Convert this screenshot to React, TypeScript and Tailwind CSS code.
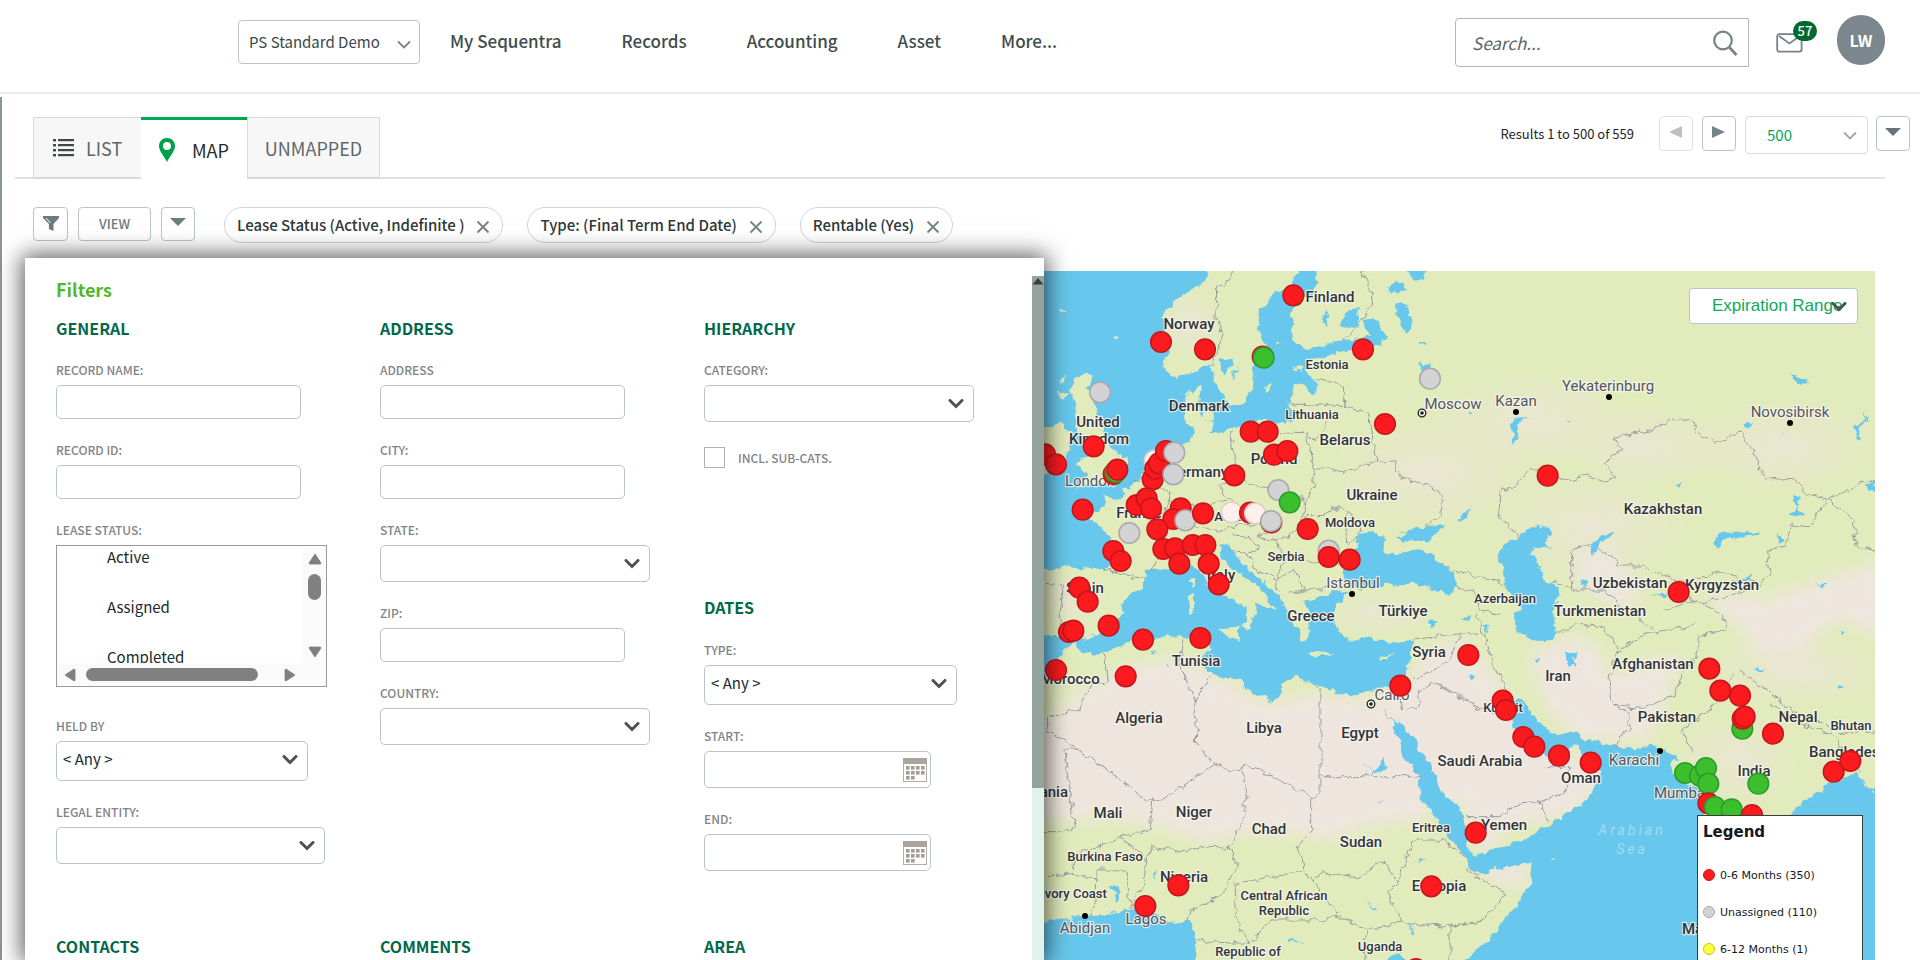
import React from "react";
import { clsx } from "clsx";

type Pt = [number, number];

/* ---------- small drawings ---------- */

function Chevron({ thin = false, className = "" }: { thin?: boolean; className?: string }) {
  return (
    <svg viewBox="0 0 16 10" className={clsx("pointer-events-none absolute h-[10px] w-4", className)} fill="none" aria-hidden="true">
      <path d="M2 1.5 L8 7.5 L14 1.5" stroke="currentColor" strokeWidth={thin ? 1.8 : 3} strokeLinecap={thin ? "butt" : "round"} />
    </svg>
  );
}

function Triangle({ dir, className = "" }: { dir: "up" | "down" | "left" | "right"; className?: string }) {
  const d = {
    up: "M7 2 L13 11 Q13 12 12 12 L2 12 Q1 12 1 11 Z",
    down: "M7 12 L13 3 Q13 2 12 2 L2 2 Q1 2 1 3 Z",
    left: "M2 7 L11 1 Q12 1 12 2 L12 12 Q12 13 11 13 Z",
    right: "M12 7 L3 1 Q2 1 2 2 L2 12 Q2 13 3 13 Z",
  }[dir];
  return (
    <svg viewBox="0 0 14 14" className={clsx("h-[14px] w-[14px]", className)} stroke="currentColor" strokeWidth="0.8" strokeLinejoin="round" aria-hidden="true">
      <path d={d} fill="currentColor" />
    </svg>
  );
}

function ButtonArrow({ dir }: { dir: "down" | "left" | "right" }) {
  const d = { down: "M0 3 H16 L8 11 Z", left: "M1 7 L14 1 V13 Z", right: "M14 7 L1 1 V13 Z" }[dir];
  return (
    <svg viewBox="0 0 16 14" className="-mt-1 h-[14px] w-4" aria-hidden="true">
      <path d={d} fill="currentColor" />
    </svg>
  );
}

function CalendarIcon() {
  const cells: Pt[] = [[3, 8], [8, 8], [13, 8], [18, 8], [3, 13], [8, 13], [13, 13], [18, 13], [3, 18], [8, 18]];
  return (
    <svg viewBox="0 0 24 24" className="h-6 w-6" aria-hidden="true">
      <rect x="0.5" y="0.5" width="23" height="23" fill="#fff" stroke="#b3ada6" />
      <rect width="24" height="6" fill="#aaa49d" />
      {cells.map(([x, y]) => (
        <rect key={`${x}-${y}`} x={x} y={y} width="3.600" height="3.600" fill="#a39d96" />
      ))}
    </svg>
  );
}

/* ---------- header ---------- */

function Header() {
  return (
    <header className="flex h-[94px] shrink-0 items-start border-b-2 border-[#e8ecec] pr-[35px] pl-[238px]">
      <div className="relative mt-5">
        <select aria-label="Portfolio" className="h-11 w-[182px] appearance-none rounded border border-[#bac5c9] bg-white pl-[10px] text-[15px] text-[#3c4648]">
          <option>PS Standard Demo</option>
        </select>
        <Chevron thin className="top-5 right-2 text-[#76848a]" />
      </div>
      <nav className="mt-7 ml-[30px] flex gap-[60px] text-[17px] leading-[26px] font-medium text-[#414b4d]">
        {["My Sequentra", "Records", "Accounting", "Asset", "More..."].map((n) => (
          <a key={n} href="#">{n}</a>
        ))}
      </nav>
      <div className="mt-[18px] ml-auto flex h-[49px] w-[294px] items-center rounded-l border border-[#b4b4c0] pr-[10px] pl-4">
        <input aria-label="Search" placeholder="Search..." className="min-w-0 flex-1 text-[17px] italic outline-none placeholder:text-[#5d6668]" />
        <svg viewBox="0 0 26 26" className="h-[26px] w-[26px]" fill="none" stroke="#76848a" aria-hidden="true">
          <circle cx="11" cy="10.5" r="8.8" strokeWidth="2.200" />
          <path d="M17 17 L24.5 25" strokeWidth="2.800" />
        </svg>
      </div>
      <button aria-label="Messages, 57 unread" className="relative mt-[33px] ml-[27px] h-5 w-[27px]">
        <svg viewBox="0 0 27 20" className="h-5 w-[27px]" fill="none" stroke="#76848a" strokeWidth="1.8" aria-hidden="true">
          <rect x="1.2" y="1.2" width="24.4" height="17.4" rx="2" />
          <path d="M3 3 L13.4 10.5 L24 3" />
        </svg>
        <span className="absolute -top-3 left-[17px] flex h-5 w-6 items-center justify-center rounded-full bg-[#00692f] text-[13px] leading-5 font-medium text-white">57</span>
      </button>
      <button aria-label="Account" className="mt-[15px] ml-[34px] flex h-[50px] w-12 items-center justify-center rounded-full bg-[#7b878d] text-base font-bold text-white">
        LW
      </button>
    </header>
  );
}

/* ---------- tabs and paging ---------- */

function TabsBar() {
  const square = "flex h-[35px] w-[34px] items-center justify-center rounded border";
  return (
    <div className="mr-[10px] ml-[15px] flex h-[85px] shrink-0 items-end">
      <div className="flex h-[63px] w-full min-w-0 items-end">
        <div className="w-[18px] self-stretch border-b-2 border-[#dfe2e2]" />
        <div role="tablist" className="flex h-[62px] text-lg leading-none">
          <button role="tab" aria-selected={false} className="flex w-[108px] items-center gap-3 border border-r-0 border-b-2 border-[#d6dada] bg-[#f7f7f7] pl-[19px] text-[#5f6668]">
            <svg viewBox="0 0 21 18" className="h-[18px] w-[21px]" fill="#3e4648" aria-hidden="true">
              {[0, 5, 10, 15].map((y) => (
                <g key={y}>
                  <rect x="0" y={y} width="3" height="2.4" />
                  <rect x="5" y={y} width="16" height="2.2" />
                </g>
              ))}
            </svg>
            LIST
          </button>
          <button role="tab" aria-selected className="flex w-[106px] items-center gap-[17px] border-t-[3px] border-[#00a651] bg-white pl-[18px] text-[#222b2d]">
            <svg viewBox="0 0 16 24" className="h-6 w-4" aria-hidden="true">
              <path fillRule="evenodd" fill="#00a04b" d="M8 0 C12.5 0 16 3.3 16 8 C16 13 10.5 19 8 24 C5.500 19 0 13 0 8 C0 3.300 3.500 0 8 0 Z M8 4 A4 4 0 1 0 8 12 A4 4 0 1 0 8 4 Z" />
            </svg>
            MAP
          </button>
          <button role="tab" aria-selected={false} className="w-[133px] border border-b-2 border-[#d6dada] bg-[#f7f7f7] text-[#5f6668]">
            UNMAPPED
          </button>
        </div>
        <div className="mr-[25px] flex-1 self-stretch border-b-2 border-[#dfe2e2]">
          <div className="-mr-[25px] flex items-start justify-end">
            <span className="mr-[25px] text-[13px] leading-9 text-[#1f2427]">Results 1 to 500 of 559</span>
            <button aria-label="Previous page" className={clsx(square, "border-[#dde2e4] text-[#b9c1c4]")}>
              <ButtonArrow dir="left" />
            </button>
            <button aria-label="Next page" className={clsx(square, "ml-[9px] border-[#bac5c9] text-[#76848a]")}>
              <ButtonArrow dir="right" />
            </button>
            <div className="relative ml-[9px]">
              <select aria-label="Page size" className="h-[38px] w-[123px] appearance-none rounded border border-[#e0dad3] bg-white pl-[21px] text-[15px] text-[#00a651]">
                <option>500</option>
              </select>
              <Chevron thin className="top-[15px] right-[10px] text-[#a0a5a8]" />
            </div>
            <button aria-label="More options" className={clsx(square, "ml-2 border-[#bac5c9] text-[#66757b]")}>
              <ButtonArrow dir="down" />
            </button>
          </div>
        </div>
      </div>
    </div>
  );
}

function FilterBar() {
  const btn = "flex h-[34px] items-center justify-center rounded border border-[#bac5c9] bg-white text-[#6d7b80]";
  return (
    <div className="flex h-[79px] shrink-0 items-start pt-7 pl-[33px]">
      <button aria-label="Filter" className={clsx(btn, "w-[35px]")}>
        <svg viewBox="0 0 16 16" className="h-4 w-4" fill="currentColor" aria-hidden="true">
          <path d="M0 0 H16 V2 L10.500 8 V15 L6 13 V8 L0 2 Z" />
          <path d="M3 2 L7.500 7" stroke="#fff" strokeWidth="1" />
        </svg>
      </button>
      <button className={clsx(btn, "ml-[10px] w-[73px] text-[13px] font-medium")}>VIEW</button>
      <button aria-label="View options" className={clsx(btn, "ml-[10px] w-[34px]")}>
        <ButtonArrow dir="down" />
      </button>
      <ul className="ml-[29px] flex gap-6 text-[15px] font-medium text-[#2f383a]">
        {["Lease Status (Active, Indefinite )", "Type: (Final Term End Date)", "Rentable (Yes)"].map((c) => (
          <li key={c} className="flex h-9 items-center gap-3 rounded-full border border-[#ced5d8] bg-white px-3">
            {c}
            <button aria-label={`Remove ${c}`} className="mt-1 text-[#76848a]">
              <svg viewBox="0 0 14 14" className="h-[14px] w-[14px]" aria-hidden="true">
                <path d="M1.500 1.500 L12.500 12.500 M12.500 1.500 L1.500 12.500" stroke="currentColor" strokeWidth="1.900" />
              </svg>
            </button>
          </li>
        ))}
      </ul>
    </div>
  );
}

/* ---------- filter panel ---------- */

const control = "block appearance-none rounded-[5px] border border-[#bac5c9] bg-white text-[15px] text-[#20282b] outline-none";

function Field({ id, label, children }: { id: string; label: string; children: React.ReactNode }) {
  return (
    <div>
      <label htmlFor={id} className="mb-[5px] block text-[12px] leading-5 font-medium text-[#808485]">{label}</label>
      {children}
    </div>
  );
}

function TextField({ id, label }: { id: string; label: string }) {
  return (
    <Field id={id} label={label}>
      <input id={id} type="text" className={clsx(control, "h-[34px] w-[245px] px-2")} />
    </Field>
  );
}

function SelectField({ id, label, value = "", size }: { id: string; label: string; value?: string; size: string }) {
  return (
    <Field id={id} label={label}>
      <div className={clsx("relative", size)}>
        <select id={id} className={clsx(control, "h-full w-full pb-[3px] pl-[6px]")}>
          <option>{value}</option>
        </select>
        <Chevron className="top-[14px] right-[10px] text-[#4d5153]" />
      </div>
    </Field>
  );
}

function DateField({ id, label }: { id: string; label: string }) {
  return (
    <Field id={id} label={label}>
      <div className={clsx(control, "flex h-[37px] w-[227px] items-center pr-[3px]")}>
        <input id={id} type="text" className="min-w-0 flex-1 px-2 outline-none" />
        <button aria-label={`Choose ${label.toLowerCase()}`}>
          <CalendarIcon />
        </button>
      </div>
    </Field>
  );
}

function LeaseStatusList() {
  return (
    <div className="mb-2 grid h-[142px] w-[271px] grid-cols-[1fr_23px] grid-rows-[1fr_23px] border border-[#979b9d] text-[#7f7f7f]">
      <select id="lease-status" multiple className="block h-full w-full overflow-hidden text-[15px] text-[#20282b] outline-none [scrollbar-width:none]">
        {["Active", "Assigned", "Completed", "Indefinite"].map((o) => (
          <option key={o} className="p-0 pb-[29px] pl-[50px] leading-[22px]">{o}</option>
        ))}
      </select>
      <div className="flex flex-col items-center bg-[#fafafa] pt-[6px]">
        <Triangle dir="up" />
        <div className="mt-2 h-[26px] w-[13px] rounded-full bg-[#808080]" />
        <Triangle dir="down" className="mt-auto mb-1" />
      </div>
      <div className="col-span-2 flex items-center bg-[#fafafa] pr-[29px] pl-[6px]">
        <Triangle dir="left" />
        <div className="ml-[9px] h-[13px] w-[172px] rounded-full bg-[#808080]" />
        <Triangle dir="right" className="ml-auto" />
      </div>
    </div>
  );
}

function Heading({ children, className = "" }: { children: string; className?: string }) {
  return <h3 className={clsx("text-[16px] leading-5 font-bold text-[#00694a]", className)}>{children}</h3>;
}

function FiltersPanel() {
  return (
    <section aria-label="Filters" className="relative z-10 flex w-[1019px] shrink-0 overflow-visible bg-white shadow-[0_0_22px_3px_rgba(0,0,0,0.65)]">
      <div className="min-w-0 flex-1 overflow-hidden pt-[17px] pl-[31px]">
        <h2 className="text-[18px] leading-7 font-bold text-[#54b824]">Filters</h2>
        <div className="mt-[15px] grid grid-cols-[324px_324px_1fr] gap-y-[65px]">
          <div className="flex flex-col gap-[21px]">
            <Heading className="mb-px">GENERAL</Heading>
            <TextField id="record-name" label="RECORD NAME:" />
            <TextField id="record-id" label="RECORD ID:" />
            <Field id="lease-status" label="LEASE STATUS:">
              <LeaseStatusList />
            </Field>
            <SelectField id="held-by" label="HELD BY" value="< Any >" size="h-10 w-[252px]" />
            <SelectField id="legal-entity" label="LEGAL ENTITY:" size="h-[37px] w-[269px]" />
          </div>
          <div className="flex flex-col gap-[21px]">
            <Heading className="mb-px">ADDRESS</Heading>
            <TextField id="address" label="ADDRESS" />
            <TextField id="city" label="CITY:" />
            <SelectField id="state" label="STATE:" size="h-[37px] w-[270px]" />
            <TextField id="zip" label="ZIP:" />
            <SelectField id="country" label="COUNTRY:" size="h-[37px] w-[270px]" />
          </div>
          <div className="flex flex-col gap-[21px]">
            <Heading className="mb-px">HIERARCHY</Heading>
            <SelectField id="category" label="CATEGORY:" size="h-[37px] w-[270px]" />
            <label className="mt-1 flex items-center gap-[13px] text-[12px] leading-5 font-medium text-[#808485]">
              <input type="checkbox" className="h-[21px] w-[21px] appearance-none border border-[#b4b0ab] bg-white" />
              INCL. SUB-CATS.
            </label>
            <Heading className="mt-[108px] mb-[2px]">DATES</Heading>
            <SelectField id="type" label="TYPE:" value="< Any >" size="h-10 w-[253px]" />
            <DateField id="start" label="START:" />
            <DateField id="end" label="END:" />
          </div>
          <Heading>CONTACTS</Heading>
          <Heading>COMMENTS</Heading>
          <Heading>AREA</Heading>
        </div>
      </div>
      <div className="mt-[18px] w-3 shrink-0 bg-[#dff3e9]">
        <div className="flex h-[512px] justify-center bg-[#94a49c] pt-[2px]">
          <svg viewBox="0 0 12 7" className="h-[7px] w-3" aria-hidden="true">
            <path d="M6 0 L11.500 6.500 H0.500 Z" fill="#3a3f3d" />
          </svg>
        </div>
      </div>
    </section>
  );
}

/* ---------- map ---------- */

const EURASIA =
  "M20,930 L110,920 L180,930 L235,925 L248,880 L240,830 L212,800 L178,782 L172,758 L228,745 L222,704 L242,712 L272,722 L280,690 L320,665 L338,635 L362,590 L385,560 L430,552 L480,555 L492,505 L470,490 L465,400 L515,378 L512,415 L498,440 L520,470 L545,492 L542,520 L600,508 L640,495 L700,482 L750,492 L790,485 L778,430 L792,380 L820,370 L842,402 L860,390 L858,362 L828,340 L835,298 L900,290 L940,270 L1000,272 L1058,252 L1030,225 L940,246 L880,255 L832,270 L788,235 L785,160 L830,110 L865,70 L850,20 L2560,20 L2560,1610 L2510,1580 L2485,1535 L2440,1555 L2400,1570 L2370,1590 L2320,1630 L2290,1660 L2230,1690 L2200,1830 L2130,2020 L2080,1980 L2030,1720 L2005,1590 L1970,1575 L1930,1550 L1922,1505 L1950,1500 L1880,1456 L1790,1465 L1720,1452 L1660,1440 L1630,1415 L1580,1425 L1530,1390 L1500,1350 L1470,1310 L1445,1325 L1445,1390 L1470,1440 L1520,1475 L1560,1495 L1615,1490 L1632,1450 L1650,1470 L1660,1500 L1712,1530 L1695,1590 L1665,1620 L1610,1660 L1530,1712 L1430,1760 L1330,1786 L1315,1760 L1308,1700 L1300,1660 L1268,1620 L1232,1590 L1210,1530 L1160,1450 L1112,1385 L1105,1350 L1118,1290 L1126,1250 L1140,1190 L1150,1140 L1080,1148 L1000,1133 L960,1145 L922,1110 L905,1050 L870,1040 L930,1010 L935,985 L870,1010 L850,1015 L820,1030 L850,1065 L830,1090 L845,1115 L822,1145 L800,1100 L765,1050 L752,1020 L735,995 L680,950 L620,890 L600,850 L568,858 L575,895 L620,935 L690,985 L740,1050 L700,1035 L675,1030 L678,1060 L650,1110 L635,1095 L655,1065 L640,1030 L590,1010 L545,985 L520,945 L490,915 L440,935 L400,922 L348,930 L335,985 L275,1025 L282,1055 L240,1110 L190,1128 L140,1140 L95,1125 L20,1125 Z";

const SCANDINAVIA =
  "M540,20 L512,75 L455,105 L425,140 L395,170 L408,200 L390,235 L415,270 L398,310 L410,335 L440,355 L490,335 L520,318 L545,310 L548,350 L575,400 L600,440 L640,432 L665,390 L672,310 L720,275 L700,250 L682,200 L690,150 L720,110 L780,80 L815,20 Z";

const AFRICA =
  "M20,1255 L70,1220 L100,1175 L125,1150 L150,1175 L220,1183 L262,1165 L300,1145 L400,1130 L470,1128 L530,1128 L545,1165 L515,1205 L545,1245 L632,1260 L650,1295 L732,1325 L752,1300 L762,1265 L800,1248 L870,1278 L970,1310 L1050,1285 L1115,1290 L1108,1385 L1095,1388 L1052,1335 L1085,1385 L1130,1500 L1160,1540 L1175,1620 L1210,1660 L1240,1710 L1290,1770 L1312,1800 L1320,1830 L1350,1842 L1430,1820 L1505,1808 L1500,1870 L1460,1940 L1390,2020 L1300,2110 L495,2110 L500,2020 L478,1982 L420,1990 L380,1955 L300,1945 L250,1960 L160,1968 L20,1985 Z";

const ISLANDS = [
  "M148,345 L190,345 L182,372 L162,390 L200,395 L195,440 L215,500 L240,560 L262,582 L300,590 L292,622 L265,652 L200,668 L140,680 L172,648 L138,612 L170,585 L162,540 L140,505 L132,430 L118,390 Z",
  "M20,510 L90,487 L122,520 L112,600 L82,640 L20,642 Z",
  "M565,1110 L632,1098 L625,1142 L600,1135 Z",
  "M474,1010 L495,1005 L495,1050 L478,1060 Z",
  "M480,955 L492,950 L492,985 L480,985 Z",
  "M838,1175 L910,1178 L908,1186 L840,1184 Z",
  "M1050,1190 L1090,1180 L1075,1200 L1055,1200 Z",
  "M520,450 L545,455 L545,485 L520,478 Z",
  "M705,375 L720,365 L715,390 L708,400 Z",
  "M800,320 L822,315 L815,335 L798,332 Z",
  "M738,250 L755,248 L748,258 Z",
  "M90,355 L108,345 L100,370 L85,375 Z",
  "M85,400 L118,395 L100,420 Z",
  "M88,150 L104,152 L96,160 Z",
  "M250,235 L268,230 L260,246 Z",
  "M240,1050 L262,1038 L255,1052 Z",
  "M1565,1789 L1582,1789 L1582,1793 L1565,1793 Z",
];

const LAKES = [
  "M975,870 L990,825 L1040,812 L1068,845 L1062,868 L1092,888 L1130,872 L1165,868 L1200,882 L1250,925 L1275,940 L1280,975 L1262,1005 L1150,972 L1060,975 L1000,990 L955,985 L935,940 L955,900 Z",
  "M1095,838 L1150,802 L1200,800 L1245,795 L1200,840 L1155,850 Z",
  "M1470,830 L1510,800 L1555,800 L1562,830 L1545,850 L1570,860 L1520,860 L1495,880 L1515,890 L1530,930 L1548,970 L1590,975 L1595,1005 L1572,1030 L1575,1130 L1530,1142 L1465,1118 L1450,1080 L1470,1045 L1432,990 L1420,930 L1400,880 L1420,850 Z",
  "M870,1010 L930,1000 L965,1000 L930,1020 L905,1060 L860,1030 Z",
  "M1000,180 L1030,175 L1068,230 L1050,258 L1010,210 Z",
  "M1098,130 L1130,125 L1148,205 L1130,220 L1100,160 Z",
  "M1075,90 L1105,65 L1130,90 L1080,100 Z",
  "M1120,20 L1190,20 L1185,65 L1160,62 Z",
  "M568,300 L600,290 L605,315 L580,345 Z",
  "M610,330 L625,315 L612,365 Z",
  "M875,180 L890,150 L892,200 Z",
  "M925,190 L960,150 L990,140 L985,200 L950,205 Z",
  "M1168,250 L1190,248 L1185,262 Z",
  "M1165,310 L1200,315 L1180,330 Z",
  "M1440,510 L1455,475 L1495,470 L1465,490 L1455,520 L1470,530 L1452,545 Z",
  "M1290,775 L1325,740 L1310,775 L1292,782 Z",
  "M1680,860 L1700,835 L1755,815 L1750,830 L1710,845 L1685,890 Z",
  "M2050,850 L2070,815 L2190,815 L2185,825 L2085,835 L2065,865 Z",
  "M2240,820 L2265,840 L2245,845 Z",
  "M2290,705 L2310,710 L2300,750 L2325,770 L2280,765 L2300,735 Z",
  "M1935,675 L1955,665 L1945,684 Z",
  "M2140,490 L2165,490 L2155,507 L2142,503 Z",
  "M2238,535 L2285,500 L2260,520 Z",
  "M2470,500 L2505,480 L2505,450 L2512,480 L2485,500 L2490,540 L2475,520 Z",
  "M2280,340 L2300,345 L2340,368 L2300,372 Z",
  "M2505,670 L2540,665 L2540,690 L2515,692 Z",
  "M2110,965 L2170,945 L2160,960 L2120,968 Z",
  "M1865,1005 L1920,1000 L1910,1012 Z",
  "M1655,960 L1672,965 L1665,988 L1650,980 Z",
  "M1610,1180 L1640,1170 L1630,1210 L1615,1225 Z",
  "M1515,1200 L1532,1198 L1525,1210 Z",
  "M1360,1090 L1380,1095 L1372,1125 Z",
  "M1285,1080 L1325,1065 L1315,1085 Z",
  "M1195,1080 L1225,1085 L1200,1110 Z",
  "M1318,1245 L1330,1250 L1322,1262 Z",
  "M1000,1510 L1035,1530 L1060,1500 L1070,1525 L1035,1540 L1022,1555 L1030,1530 Z",
  "M1040,1632 L1065,1615 L1050,1630 Z",
  "M232,1885 L268,1880 L270,1920 L250,1925 L255,1900 Z",
  "M372,1830 L382,1835 L375,1860 Z",
  "M1135,1985 L1150,2020 L1142,2025 Z",
  "M1165,1800 L1180,1802 L1172,1812 Z",
  "M1015,1925 L1035,1955 L1030,1958 Z",
  "M780,2040 L830,2045 L780,2048 Z",
  "M1325,2100 L1370,2055 L1370,2110 Z",
  "M1070,2095 L1110,2080 L1130,2110 L1070,2110 Z",
  "M2415,1280 L2440,1278 L2425,1292 Z",
  "M2170,1225 L2210,1230 L2190,1238 Z",
  "M2430,1110 L2450,1112 L2440,1118 Z",
  "M2360,970 L2390,972 L2375,980 Z",
  "M1320,452 L1330,455 L1322,462 Z",
  "M1610,482 L1622,488 L1615,490 Z",
  "M360,1175 L385,1180 L370,1182 Z",
  "M410,1205 L418,1225 L408,1220 Z",
];

const BORDERS =
  "M608,20 L606,55 L560,80 L558,170 L575,210 L565,260 L548,312 " +
  "M990,20 L1005,60 L1030,110 L1000,180 L935,246 " +
  "M860,355 L900,365 L940,380 L945,440 M780,432 L880,435 L945,440 L1015,460 L1030,540 L1040,605 M900,450 L885,500 L860,535 L835,530 M750,515 L830,518 L850,620 L848,680 L820,740 M850,620 L940,635 L1035,605 L1090,600 L1110,650 L1200,680 L1240,710 L1230,770 L1190,800 " +
  "M605,515 L615,600 L620,660 L565,680 L590,710 L620,730 M615,650 L690,680 L760,700 L820,720 L820,765 M420,690 L415,720 L520,740 L590,720 M500,800 L560,815 L640,790 L720,800 L690,830 L740,840 L790,820 L820,765 L870,770 L930,740 L990,790 L985,830 L950,855 M945,760 L950,850 " +
  "M600,820 L640,830 L690,860 L650,880 L680,930 L740,960 L745,995 M740,840 L765,900 L740,960 L790,930 L820,990 L770,1000 M830,900 L900,915 L950,905 M820,990 L900,985 L935,960 M220,925 L280,945 L340,960 M42,970 L100,975 L85,1110 M370,930 L395,850 L350,790 L400,760 L420,700 L340,650 L300,670 M330,640 L420,650 L430,570 M650,880 L600,870 " +
  "M1465,830 L1405,770 L1415,680 L1445,690 L1500,625 L1590,650 L1620,665 L1670,645 L1720,665 L1760,655 L1720,610 L1775,570 L1750,535 L1860,510 L1940,475 L1985,485 L2000,520 L2070,550 L2130,515 L2160,560 L2210,660 L2290,655 L2330,700 L2390,715 L2340,800 L2280,795 L2270,860 L2210,875 L2220,940 L2190,970 L2060,935 L1970,965 L1870,940 L1845,915 L1770,915 L1685,850 L1625,870 L1625,990 L1580,960 L1550,975 " +
  "M2395,720 L2510,660 L2560,668 M2395,720 L2470,780 L2475,860 L2560,870 M1230,920 L1330,945 L1400,960 L1440,985 M1275,985 L1330,990 L1345,1050 L1410,1060 M1625,990 L1720,990 L1790,1050 L1880,1110 M1970,965 L1960,1010 L2020,1030 L2120,1000 L2190,970 M1900,1050 L2000,1020 L2080,1070 L2090,1110 L2000,1130 " +
  "M1575,1120 L1650,1090 L1710,1100 L1750,1140 L1760,1175 L1740,1250 L1745,1335 L1830,1345 L1930,1310 L1960,1240 L2000,1190 L2010,1130 M1755,1180 L1840,1125 L1920,1115 L2000,1090 M1745,1335 L1800,1360 L1800,1410 L1765,1435 L1760,1465 M1990,1485 L1955,1410 L2050,1340 L2100,1280 L2110,1240 M2215,1330 L2310,1390 L2405,1425 L2405,1400 L2290,1350 L2180,1270 L2130,1230 M2430,1420 L2560,1415 M2420,1430 L2450,1500 L2490,1530 M1340,1060 L1390,1210 L1430,1290 M1150,1140 L1290,1118 L1345,1120 M1230,1275 L1370,1355 L1440,1365 M1315,1670 L1410,1670 L1450,1635 L1530,1625 L1605,1600 L1620,1520 L1540,1520 M1530,1625 L1555,1685 " +
  "M220,1185 L235,1265 L180,1275 L150,1345 L55,1370 L55,1410 L290,1570 L350,1625 L405,1615 L555,1510 L500,1450 L495,1320 L445,1210 L465,1135 M545,1250 L515,1285 L495,1325 M555,1510 L610,1530 L655,1512 L845,1610 L845,1710 L805,1760 L820,1830 M870,1285 L870,1600 L845,1610 M870,1550 L1165,1550 M630,1520 L650,1590 L640,1685 L595,1760 L620,1820 M368,1625 L360,1710 L270,1730 L130,1790 L130,1840 M42,1715 L132,1715 L105,1470 L150,1470 " +
  "M350,1810 L365,1760 L440,1770 L595,1760 L625,1810 L570,1910 L480,1950 L470,1985 M350,1810 L340,1870 L300,1940 M270,1730 L330,1780 L350,1810 M195,1830 L190,1970 M195,1830 L290,1830 L300,1940 M50,1850 L130,1840 L200,1860 M820,1830 L740,1850 L615,1870 L620,1980 L660,2050 L720,1980 L870,1980 L930,1970 L1010,2010 L1110,1990 L1270,2000 L1350,1980 M820,1830 L930,1970 M850,1850 L890,1840 L990,1850 L1060,1800 L1100,1870 L1070,1900 L1120,1990 M1100,1870 L1150,1740 L1240,1740 L1310,1795 M1110,1310 L1115,1350 L1170,1340 L1165,1290 L1215,1270 L1350,1350 M1150,1260 L1260,1200 L1290,1120 M1310,1830 L1430,1900 L1360,1980 L1260,2000 L1260,2110 M500,2045 L660,2050 M1010,2010 L1000,2110";

const DESERTS = [
  "M20,1390 L150,1300 L260,1230 L420,1190 L560,1240 L700,1330 L860,1300 L1040,1320 L1120,1290 L1180,1180 L1300,1130 L1400,1260 L1520,1420 L1740,1540 L1640,1660 L1440,1700 L1350,1790 L1300,1640 L1240,1620 L1160,1690 L1040,1690 L900,1740 L760,1720 L640,1720 L540,1750 L380,1700 L250,1680 L20,1680 Z",
  "M1500,1180 L1620,1130 L1700,1150 L1740,1250 L1860,1200 L1960,1180 L1920,1280 L1860,1440 L1640,1440 L1540,1330 Z",
  "M2120,1080 L2240,1000 L2380,960 L2560,900 L2560,1130 L2420,1080 L2300,1180 L2180,1190 Z",
  "M1640,880 L1720,860 L1800,940 L1840,1020 L1760,1040 L1640,980 Z",
  "M1330,1820 L1500,1800 L1490,1880 L1420,1880 Z",
  "M2040,1000 L2200,1010 L2140,1090 L2060,1060 Z",
];

const STEPPES: [number, number, number, number][] = [
  [1200, 640, 340, 180],
  [1500, 480, 330, 150],
  [1850, 560, 260, 130],
  [2260, 560, 300, 150],
  [1680, 800, 320, 170],
  [480, 190, 110, 120],
  [120, 1020, 130, 90],
  [1050, 1060, 200, 70],
  [2120, 1500, 200, 160],
  [2300, 1230, 300, 120],
];

type Label = { t: string; x: number; y: number; k?: "small" | "city"; a?: "start" | "end" };

const LABELS: Label[] = [
  { t: "Finland", x: 1330, y: 297 }, { t: "Norway", x: 1189, y: 324 }, { t: "Denmark", x: 1199, y: 406 },
  { t: "United", x: 1098, y: 422 }, { t: "Kingdom", x: 1099, y: 439 }, { t: "London", x: 1090, y: 481, k: "city" },
  { t: "Germany", x: 1198, y: 472 }, { t: "Poland", x: 1274, y: 459 }, { t: "Lithuania", x: 1312, y: 414, k: "small" },
  { t: "Estonia", x: 1327, y: 364, k: "small" }, { t: "Belarus", x: 1345, y: 440 }, { t: "Ukraine", x: 1372, y: 495 },
  { t: "Moldova", x: 1350, y: 522, k: "small" }, { t: "Moscow", x: 1453, y: 404, k: "city" }, { t: "France", x: 1139, y: 513 },
  { t: "Austria", x: 1235, y: 516, k: "small" }, { t: "Serbia", x: 1286, y: 556, k: "small" }, { t: "Italy", x: 1221, y: 575 },
  { t: "Istanbul", x: 1353, y: 583, k: "city" }, { t: "Spain", x: 1085, y: 588 }, { t: "Greece", x: 1311, y: 616 },
  { t: "Türkiye", x: 1403, y: 611 }, { t: "Kazan", x: 1516, y: 401, k: "city" }, { t: "Yekaterinburg", x: 1608, y: 386, k: "city" },
  { t: "Novosibirsk", x: 1790, y: 412, k: "city" }, { t: "Kazakhstan", x: 1663, y: 509 }, { t: "Uzbekistan", x: 1630, y: 583 },
  { t: "Kyrgyzstan", x: 1722, y: 585 }, { t: "Azerbaijan", x: 1505, y: 598, k: "small" }, { t: "Turkmenistan", x: 1600, y: 611 },
  { t: "Tunisia", x: 1196, y: 661 }, { t: "Morocco", x: 1070, y: 679 }, { t: "Algeria", x: 1139, y: 718 },
  { t: "Libya", x: 1264, y: 728 }, { t: "Egypt", x: 1360, y: 733 }, { t: "Cairo", x: 1392, y: 695, k: "city" },
  { t: "Syria", x: 1429, y: 652 }, { t: "Saudi Arabia", x: 1480, y: 761 }, { t: "Iran", x: 1558, y: 676 },
  { t: "Afghanistan", x: 1653, y: 664 }, { t: "Pakistan", x: 1667, y: 717 }, { t: "Nepal", x: 1798, y: 717 },
  { t: "Bhutan", x: 1851, y: 725, k: "small" }, { t: "Bangladesh", x: 1809, y: 752, a: "start" }, { t: "India", x: 1754, y: 771 },
  { t: "Karachi", x: 1634, y: 760, k: "city" }, { t: "Mumbai", x: 1654, y: 793, k: "city", a: "start" }, { t: "Kuwait", x: 1503, y: 707, k: "small" },
  { t: "Oman", x: 1581, y: 778 }, { t: "Yemen", x: 1504, y: 825 }, { t: "Eritrea", x: 1431, y: 827, k: "small" },
  { t: "Ethiopia", x: 1439, y: 886 }, { t: "Sudan", x: 1361, y: 842 }, { t: "Chad", x: 1269, y: 829 },
  { t: "Niger", x: 1194, y: 812 }, { t: "Mali", x: 1108, y: 813 }, { t: "Mauritania", x: 1068, y: 792, a: "end" },
  { t: "Burkina Faso", x: 1105, y: 856, k: "small" }, { t: "Ivory Coast", x: 1074, y: 893, k: "small" }, { t: "Abidjan", x: 1085, y: 928, k: "city" },
  { t: "Lagos", x: 1146, y: 919, k: "city" }, { t: "Nigeria", x: 1184, y: 877 }, { t: "Central African", x: 1284, y: 895, k: "small" },
  { t: "Republic", x: 1284, y: 910, k: "small" }, { t: "Republic of", x: 1248, y: 951, k: "small" }, { t: "Uganda", x: 1380, y: 946, k: "small" },
  { t: "Maldives", x: 1682, y: 929, a: "start" },
];

const CITY_DOTS: Pt[] = [[1352, 594], [1516, 412], [1609, 397], [1790, 423], [1660, 751], [1085, 916]];
const CAPITALS: Pt[] = [[1422, 413], [1371, 704]];

const COLORS = {
  r: ["#fb1a1e", "#c4161c"],
  g: ["#3cbf2d", "#2f9a2c"],
  u: ["#d3d3d5", "#a9a9ad"],
  p: ["#fdefe9", "#dccfca"],
} as const;

type Marker = [keyof typeof COLORS, number, number];

const MARKERS: Marker[] = [
  ["r", 790, 106], ["r", 393, 246], ["r", 525, 268], ["r", 698, 290], ["g", 701, 293], ["r", 999, 268], ["u", 210, 397], ["u", 1200, 356],
  ["r", 1065, 492], ["r", 191, 559], ["r", 45, 583], ["r", 78, 613], ["r", 251, 642], ["g", 257, 636], ["r", 262, 629], ["r", 158, 749],
  ["r", 662, 515], ["r", 713, 515], ["r", 732, 584], ["r", 772, 573], ["r", 613, 646], ["p", 374, 602], ["r", 368, 658], ["r", 376, 626],
  ["r", 387, 610], ["r", 408, 573], ["u", 433, 578], ["u", 430, 643], ["u", 745, 690], ["g", 779, 727],
  ["r", 320, 735], ["r", 350, 715], ["r", 363, 745], ["r", 452, 745], ["r", 430, 777], ["u", 466, 781], ["r", 519, 760], ["r", 382, 808],
  ["p", 605, 757], ["r", 660, 758], ["p", 675, 760], ["r", 724, 787], ["u", 723, 783], ["r", 833, 807], ["u", 298, 819],
  ["r", 250, 873], ["r", 272, 903], ["r", 400, 867], ["r", 435, 865], ["r", 488, 855], ["r", 526, 855], ["r", 448, 911], ["r", 536, 911],
  ["r", 566, 973], ["u", 896, 872], ["r", 896, 891], ["r", 959, 899], ["r", 148, 983], ["r", 173, 1025],
  ["r", 1553, 647], ["r", 1946, 996],
  ["r", 117, 1116], ["r", 130, 1112], ["r", 236, 1097], ["r", 339, 1139], ["r", 511, 1134], ["r", 78, 1230], ["r", 287, 1249],
  ["r", 1315, 1185], ["r", 1111, 1277], ["r", 1337, 1718], ["r", 445, 1876], ["r", 346, 1938], ["r", 1204, 1879], ["r", 1158, 2127],
  ["r", 1418, 1322], ["r", 1428, 1350], ["r", 1480, 1431], ["r", 1513, 1460], ["r", 1587, 1487], ["r", 1682, 1508],
  ["r", 2038, 1226], ["r", 2071, 1292], ["r", 2130, 1307], ["g", 2137, 1406], ["r", 2138, 1376], ["r", 2144, 1370], ["r", 2229, 1421],
  ["r", 2411, 1535], ["r", 2461, 1503],
  ["g", 1965, 1539], ["g", 2010, 1547], ["g", 2028, 1524], ["g", 2035, 1571], ["g", 2185, 1571], ["r", 2035, 1630], ["g", 2055, 1641],
  ["g", 2105, 1648], ["r", 2166, 1665],
];

function WorldMap() {
  return (
    <svg viewBox="1044 271 831 689" preserveAspectRatio="xMinYMin slice" className="block h-full w-full" role="img" aria-label="Map of records">
      <defs>
        <filter id="rough" x="0" y="0" width="100%" height="100%" colorInterpolationFilters="sRGB">
          <feTurbulence type="fractalNoise" baseFrequency="0.11" numOctaves="3" seed="4" />
          <feDisplacementMap in="SourceGraphic" scale="9" xChannelSelector="R" yChannelSelector="G" />
        </filter>
        <filter id="soft" x="-5%" y="-5%" width="110%" height="110%">
          <feGaussianBlur stdDeviation="22" />
        </filter>
        <radialGradient id="steppe">
          <stop offset="0" stopColor="#e9e6d2" />
          <stop offset="1" stopColor="#e9e6d2" stopOpacity="0" />
        </radialGradient>
        <clipPath id="land">
          <path d={EURASIA} />
          <path d={AFRICA} />
          <path d={SCANDINAVIA} />
        </clipPath>
      </defs>
      <rect x="1044" y="271" width="831" height="689" fill="#68c7ec" />
      <g filter="url(#rough)">
        <g transform="translate(1030 260) scale(0.333333)">
          <rect x="-60" y="-60" width="2760" height="2300" fill="#68c7ec" />
          <g fill="#e1ebbb">
            <path d={EURASIA} />
            <path d={SCANDINAVIA} />
            <path d={AFRICA} />
            {ISLANDS.map((d) => (
              <path key={d} d={d} />
            ))}
          </g>
          <g clipPath="url(#land)">
            {STEPPES.map(([cx, cy, rx, ry]) => (
              <ellipse key={`${cx}-${cy}`} cx={cx} cy={cy} rx={rx} ry={ry} fill="url(#steppe)" />
            ))}
            <g filter="url(#soft)" fill="#eee6de">
              {DESERTS.map((d) => (
                <path key={d} d={d} />
              ))}
            </g>
          </g>
          <path d={BORDERS} fill="none" stroke="#9a9ca0" strokeWidth="3" strokeLinejoin="round" />
          <g fill="#68c7ec">
            {LAKES.map((d) => (
              <path key={d} d={d} />
            ))}
          </g>
        </g>
      </g>
      <g className="font-[Roboto,sans-serif]" dominantBaseline="central" paintOrder="stroke" strokeLinejoin="round">
        {LABELS.map(({ t, x, y, k, a }) => (
          <text
            key={`${t}${y}`}
            x={x}
            y={y}
            textAnchor={a ?? "middle"}
            fontSize={k === "small" ? 13 : 15}
            fontWeight={k === "city" ? 400 : 500}
            fill={k === "city" ? "#55575e" : "#33353b"}
            stroke="#f6f6ee"
            strokeOpacity="0.8"
            strokeWidth="2.500"
          >
            {t}
          </text>
        ))}
        <g fill="#a5daf0" fontSize="14" fontStyle="italic" textAnchor="middle" className="tracking-[3px]">
          <text x="1632" y="830">Arabian</text>
          <text x="1632" y="849">Sea</text>
        </g>
      </g>
      {CITY_DOTS.map(([x, y]) => (
        <circle key={`${x}`} cx={x} cy={y} r="3" fill="#000" />
      ))}
      {CAPITALS.map(([x, y]) => (
        <g key={`${x}`}>
          <circle cx={x} cy={y} r="3.800" fill="#f4f4ee" stroke="#222" strokeWidth="1.300" />
          <circle cx={x} cy={y} r="1.800" fill="#222" />
        </g>
      ))}
      <g transform="translate(1030 260) scale(0.333333)">
        {MARKERS.map(([c, x, y]) => (
          <circle key={`${c}${x}-${y}`} cx={x} cy={y} r="31" fill={COLORS[c][0]} stroke={COLORS[c][1]} strokeWidth="4.500" />
        ))}
      </g>
    </svg>
  );
}

function MapPane() {
  const legend: [string, string][] = [
    ["0-6 Months (350)", "border-[#c4161c] bg-[#fb1a1e]"],
    ["Unassigned (110)", "border-[#a9a9ad] bg-[#d3d3d5]"],
    ["6-12 Months (1)", "border-[#c9c41c] bg-[#ffff3c]"],
  ];
  return (
    <section aria-label="Map" className="relative mt-[13px] mr-[45px] min-w-0 flex-1 overflow-hidden">
      <WorldMap />
      <div className="absolute top-[17px] right-[17px]">
        <select aria-label="Color markers by" className="h-9 w-[169px] appearance-none rounded border border-[#bcc2cf] bg-white pl-[22px] font-['Liberation_Sans',sans-serif] text-[17px] text-[#0fa958]">
          <option>Expiration Range</option>
        </select>
        <Chevron className="top-[14px] right-[11px] text-[#4d5153]" />
      </div>
      <div className="absolute right-3 bottom-0 h-[145px] w-[166px] overflow-hidden border border-b-0 border-[#3c3c3c] bg-white pt-1 pl-[5px] font-['DejaVu_Sans',sans-serif] text-[#16181d]">
        <h2 className="text-[15px] leading-6 font-bold">Legend</h2>
        <ul className="mt-[14px] flex flex-col text-[11px]">
          {legend.map(([name, dot]) => (
            <li key={name} className="flex h-[37px] items-center gap-[5px] whitespace-nowrap">
              <span className={clsx("mb-1 h-3 w-3 shrink-0 rounded-full border", dot)} />
              {name}
            </li>
          ))}
        </ul>
      </div>
    </section>
  );
}

export default function App() {
  return (
    <div className="flex h-screen flex-col overflow-hidden bg-white font-['Noto_Sans_CJK_SC','Noto_Sans',sans-serif]">
      <Header />
      <main className="mt-[3px] flex min-h-0 flex-1 flex-col border-l-2 border-[#8b9497]">
        <div className="-mt-[3px] -ml-[2px] flex min-h-0 flex-1 flex-col">
          <TabsBar />
          <FilterBar />
          <div className="flex min-h-0 flex-1 pl-[25px]">
            <FiltersPanel />
            <MapPane />
          </div>
        </div>
      </main>
    </div>
  );
}
